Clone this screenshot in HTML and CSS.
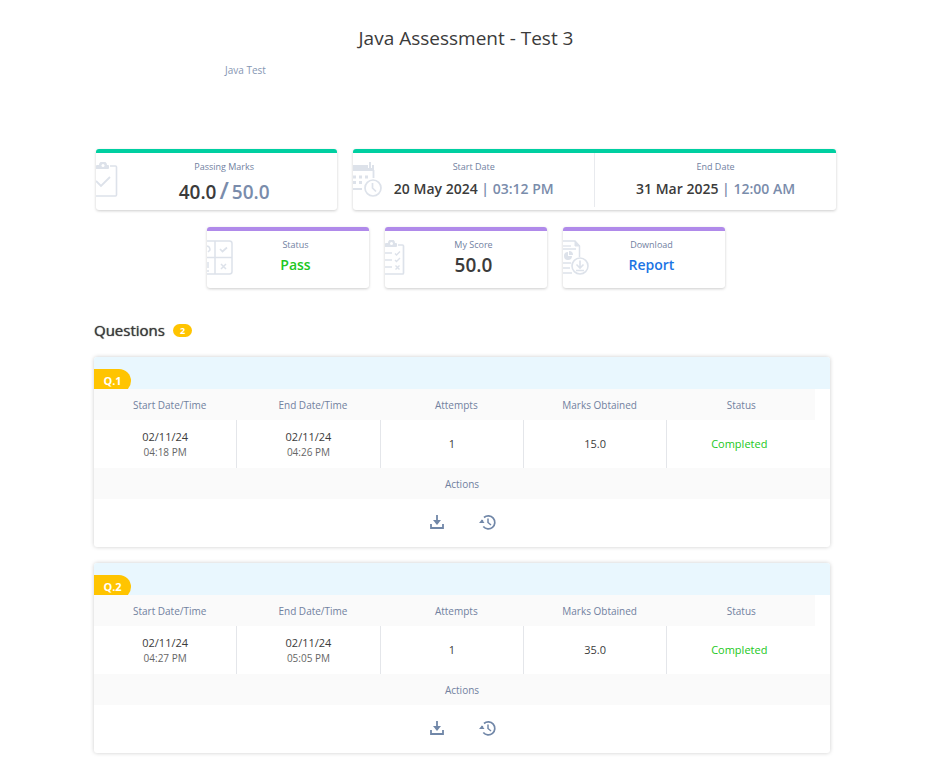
FILE: index.html
```html
<!DOCTYPE html>
<html lang="en">
<head>
<meta charset="utf-8">
<title>Java Assessment - Test 3</title>
<link rel="stylesheet" href="styles.css">
</head>
<body>
<svg class="sprite" aria-hidden="true">
  <symbol id="download" viewBox="0 0 14 14"><path d="M1 9v4h12V9M7 0v8" fill="none" stroke="currentColor" stroke-width="1.800"/><path d="M3 5h8L7 10z" fill="currentColor"/></symbol>
  <symbol id="history" viewBox="0 0 18 16"><path d="M4.300 12.500A6.500 6.500 0 1 0 5 3.500M3.500 6A6.500 6.500 0 0 0 3 9" fill="none" stroke="currentColor" stroke-width="1.700"/><path d="M0 9h5.500L3 5.500z" fill="currentColor"/><path d="M9 4.500v4l3 2.500" fill="none" stroke="currentColor" stroke-width="1.500"/></symbol>
</svg>
<header class="page-header">
  <h1 class="title">Java Assessment - Test 3</h1>
  <p class="description">Java Test</p>
</header>
<main>
  <section class="summary">
    <div class="card-row overview">
      <div class="card card-marks">
        <svg class="card-icon" width="22" height="36" viewBox="0 0 22 36" fill="none" stroke="currentColor"><path d="M14 4h5.500q1 0 1 1v28q0 1-1 1H0" stroke-width="1.600"/><path d="M0 19l5 5 9-9" stroke-width="1.800"/><path d="M0 6V4q0-1 1-1h2a4 3.500 0 0 1 8 0h1q1 0 1 1v2q0 1-1 1H0z" fill="currentColor" stroke="none"/><circle cx="7" cy="3.500" r="1.500" fill="#fff" stroke="none"/></svg>
        <div class="metric"><span class="label">Passing Marks</span><span class="value large">40.0<span class="muted"><span class="slash">/</span>50.0</span></span></div>
      </div>
      <div class="card card-dates">
        <svg class="card-icon" width="30" height="36" viewBox="0 0 30 36" fill="none" stroke="currentColor"><path d="M0 3h15v3h4V3h2v6H0z" fill="currentColor" stroke="none"/><path d="M17 0v6" stroke-width="2"/><path d="M20.500 8v8M0 27h9" stroke-width="1.800"/><path d="M0 15h17M0 20.500h12" stroke-width="3" stroke-dasharray="3 3"/><circle cx="20" cy="26" r="8" stroke-width="1.700"/><path d="M19.500 21v5l3.500 3.500" stroke-width="1.700"/></svg>
        <div class="metric"><span class="label">Start Date</span><span class="value">20 May 2024 <span class="muted">| 03:12 PM</span></span></div>
        <div class="metric"><span class="label">End Date</span><span class="value">31 Mar 2025 <span class="muted">| 12:00 AM</span></span></div>
      </div>
    </div>
    <div class="card-row results">
      <div class="card small">
        <svg class="card-icon" width="26" height="36" viewBox="0 0 26 36" fill="none" stroke="currentColor" stroke-width="1.500"><path d="M0 1h22.500q2.500 0 2.500 2.500v28q0 2.500-2.500 2.500H0M0 17.500h25M8 1v33"/><path d="M13 9l2.500 2.500L20 7.500" stroke-width="1.700"/><path d="M14 24l5 5M19 24l-5 5"/><path d="M0 6q3 .500 3 4l-2 2M1 22v6M1 30v2"/></svg>
        <div class="metric"><span class="label">Status</span><span class="value pass">Pass</span></div>
      </div>
      <div class="card small">
        <svg class="card-icon" width="20" height="36" viewBox="0 0 20 36" fill="none" stroke="currentColor"><path d="M13 5h4.500q1 0 1 1v27q0 1-1 1H0M0 13h7M0 20h7M0 27h7" stroke-width="1.700"/><path d="M0 6V4q0-1 1-1h2a3.500 3.500 0 0 1 7 0h1q1 0 1 1v2q0 1-1 1H0z" fill="currentColor" stroke="none"/><circle cx="6.500" cy="3.500" r="1.500" fill="#fff" stroke="none"/><path d="M10 13.500l1.500 1.500L15 11.500M10 20l1.500 1.500L15 18M10.500 25.500l4 4M14.500 25.500l-4 4" stroke-width="1.400"/></svg>
        <div class="metric"><span class="label">My Score</span><span class="value large">50.0</span></div>
      </div>
      <div class="card small">
        <svg class="card-icon" width="26" height="36" viewBox="0 0 26 36" fill="none" stroke="currentColor"><path d="M0 1h12l4.500 5v11M0 9h13M0 23h8M0 28h7M0 33h9" stroke-width="1.500"/><path d="M0 6h8" stroke-width="1.300"/><path d="M12 1v5h4.500z" fill="currentColor"/><path d="M5 12v4h4a4 4 0 1 1-4-4z" fill="currentColor" stroke="none"/><path d="M6 11q4 0 4 4H6z" fill="currentColor" stroke="none"/><circle cx="17" cy="26" r="8" stroke-width="1.600"/><path d="M17 20.500v7M13.500 24.500l3.500 3.500 3.500-3.500M13 30.500h8" stroke-width="1.600"/></svg>
        <div class="metric"><span class="label">Download</span><a class="value report" href="#report">Report</a></div>
      </div>
    </div>
  </section>
  <section class="questions">
    <h2 class="section-title">Questions <span class="count">2</span></h2>
    <article class="question">
      <div class="question-head"><span class="question-tag">Q.1</span></div>
      <table class="attempts">
        <thead><tr><th>Start Date/Time</th><th>End Date/Time</th><th>Attempts</th><th>Marks Obtained</th><th>Status</th></tr></thead>
        <tbody><tr><td>02/11/24<span class="time">04:18 PM</span></td><td>02/11/24<span class="time">04:26 PM</span></td><td>1</td><td>15.0</td><td class="completed">Completed</td></tr></tbody>
      </table>
      <div class="actions-head">Actions</div>
      <div class="actions">
        <button class="action" type="button" aria-label="Download"><svg width="14" height="14"><use href="#download"/></svg></button>
        <button class="action" type="button" aria-label="History"><svg width="18" height="16"><use href="#history"/></svg></button>
      </div>
    </article>
    <article class="question">
      <div class="question-head"><span class="question-tag">Q.2</span></div>
      <table class="attempts">
        <thead><tr><th>Start Date/Time</th><th>End Date/Time</th><th>Attempts</th><th>Marks Obtained</th><th>Status</th></tr></thead>
        <tbody><tr><td>02/11/24<span class="time">04:27 PM</span></td><td>02/11/24<span class="time">05:05 PM</span></td><td>1</td><td>35.0</td><td class="completed">Completed</td></tr></tbody>
      </table>
      <div class="actions-head">Actions</div>
      <div class="actions">
        <button class="action" type="button" aria-label="Download"><svg width="14" height="14"><use href="#download"/></svg></button>
        <button class="action" type="button" aria-label="History"><svg width="18" height="16"><use href="#history"/></svg></button>
      </div>
    </article>
  </section>
</main>
</body>
</html>
```
FILE: styles.css
```css
* { box-sizing: border-box; }
body {
  margin: 0;
  background: #fff;
  color: #3b3b3b;
  font-family: "Open Sans", sans-serif;
  font-size: 11px;
}
.sprite { display: none; }
.page-header { padding: 24px 92px 0 96px; }
.title {
  margin: 0;
  font-size: 19px;
  line-height: 28px;
  font-weight: 400;
  text-align: center;
}
.description {
  margin: 10px 0 0 129px;
  font-size: 10px;
  line-height: 16px;
  color: #8696b3;
}
.summary { padding: 71px 92px 0 96px; }
.card-row { display: flex; gap: 16px; }
.overview { display: grid; grid-template-columns: 1fr 2fr; }
.results { justify-content: center; margin-top: 17px; }
.card {
  position: relative;
  display: flex;
  min-height: 61px;
  padding-bottom: 3px;
  border-top: 4px solid #00cfa1;
  border-radius: 3px;
  box-shadow: 0 1px 3px rgba(0, 0, 0, .2);
}
.card-marks { padding: 0 0 0 15px; }
.small { width: 162px; border-top-color: #b08aea; padding-left: 15px; }
.card-icon { position: absolute; left: 0; top: 9px; color: #dde2ea; }
.metric {
  flex: 1;
  display: flex;
  flex-direction: column;
  align-items: center;
  padding-top: 6px;
}
.card-dates .metric + .metric { border-left: 1px solid #e8eaee; }
.label { font-size: 9px; line-height: 16px; color: #71819f; }
.value { font-size: 14px; line-height: 28px; font-weight: 600; white-space: nowrap; }
.small .value { line-height: 24px; }
.large, .small .large { font-size: 19px; }
.card-marks .value { line-height: 35px; }
.muted { color: #7a8cab; }
.slash { font-size: 24px; line-height: 20px; padding: 0 3px; }
.pass, .completed { color: #22c722; }
.report { color: #1b74e4; text-decoration: none; }
.questions { padding: 32px 98px 21px 94px; }
.section-title {
  display: flex;
  align-items: center;
  gap: 8px;
  margin: 0 0 16px;
  font-size: 15px;
  line-height: 21px;
  font-weight: 400;
  text-shadow: 0 0 1px #3b3b3b;
}
.count {
  padding: 0 7px;
  border-radius: 7px;
  background: #ffc400;
  color: #fff;
  font-size: 9px;
  line-height: 13px;
  font-weight: 700;
  text-shadow: none;
}
.question {
  margin-bottom: 16px;
  overflow: hidden;
  border-radius: 3px;
  box-shadow: 0 0 4px rgba(0, 0, 0, .2);
}
.question-head { height: 32px; padding-top: 12px; overflow: hidden; background: #e9f7fe; }
.question-tag {
  display: block;
  width: 37px;
  border-radius: 0 12px 12px 0;
  background: #ffc400;
  color: #fff;
  font-size: 11px;
  line-height: 24px;
  font-weight: 700;
  text-align: center;
}
.attempts {
  width: 98%;
  border-collapse: separate;
  border-spacing: 0;
  table-layout: fixed;
}
.attempts th, .actions-head {
  height: 31px;
  background: #fafafa;
  color: #71819f;
  font-size: 10px;
  line-height: 16px;
  font-weight: 400;
}
.attempts th { padding: 0 0 0 8px; }
.attempts th:last-child { width: 148px; padding: 0; }
.attempts td {
  height: 48px;
  padding: 0;
  border-right: 1px solid #e4e6ea;
  line-height: 16px;
  text-align: center;
}
.attempts td:last-child { border: 0; padding-right: 4px; }
.time { display: block; font-size: 10px; line-height: 14px; color: #666; }
.actions-head { display: flex; align-items: center; justify-content: center; }
.actions { display: flex; align-items: center; justify-content: center; gap: 35px; height: 48px; padding: 0 0 2px 3px; }
.action { display: flex; padding: 0; border: 0; background: none; color: #7187a8; cursor: pointer; }
```
